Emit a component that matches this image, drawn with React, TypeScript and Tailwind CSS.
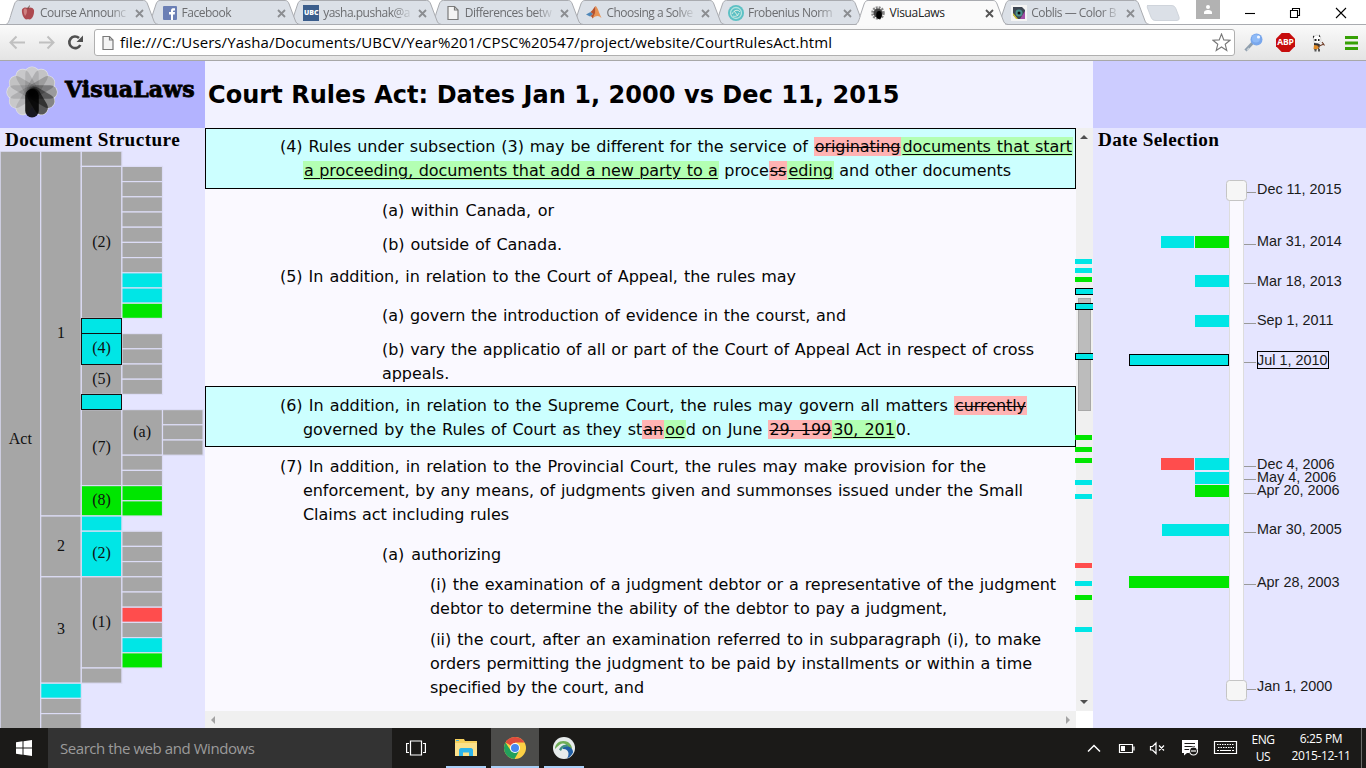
import React from "react";

/* ---------- Browser chrome ---------- */

const PageIcon = () => (
  <svg width="16" height="16" viewBox="0 0 16 16" fill="#f4f4f4" stroke="#7a7a7a" strokeWidth="1.2">
    <path d="M3 1.5h6.5l3.5 3.5v9.5H3z" />
    <path d="M9.5 1.5V5H13" fill="none" />
  </svg>
);

const AppleIcon = () => (
  <svg width="16" height="16" viewBox="0 0 16 16">
    <path d="M2 4.500C4 1.500 6 2.500 8 2.800C10.500 2 13 2.500 14 5C14.500 9 12.500 14.500 9.500 14.500C8 14 7.500 14.500 6 14.500C3 13 1.500 8 2 4.500Z" fill="#ad4a50" />
    <path d="M4 4c2-1 3 0 3 2s-1 4-2 5c-1-2-2-5-1-7z" fill="#cf8080" />
    <path d="M8 4c0-2 1-3 2-3" stroke="#6e4a40" fill="none" />
  </svg>
);

const FacebookIcon = () => (
  <svg width="16" height="16" viewBox="0 0 16 16">
    <rect x="1" y="1" width="14" height="14" rx="1" fill="#6b7fb5" />
    <path d="M9 15V9.500H7V7h2V5.500C9 3.500 10.500 3 13 3.300V5.500c-1.500-.1-2 .1-2 1V7h2l-.3 2.500H11V15z" fill="#fff" />
  </svg>
);

const UbcIcon = () => (
  <span className="flex h-4 w-4 items-center justify-center bg-[#3a5d8c] font-['Open_Sans',sans-serif] text-[7px] font-extrabold text-white">UBC</span>
);

const MatlabIcon = () => (
  <svg width="16" height="16" viewBox="0 0 16 16">
    <path d="M0 9.500L4.500 7L7 9L4 11.500Z" fill="#4f87b8" />
    <path d="M4.500 7C7 5.500 8 2 9.500 1L10 9L6.500 13.500C6 12 5 11 4 11.500L7 9Z" fill="#b5532f" />
    <path d="M9.500 1C11.500 1.500 13 8 15.500 13C13 11 11 9.500 6.500 13.500L9 8Z" fill="#e89254" />
  </svg>
);

const MathIcon = () => (
  <svg width="16" height="16" viewBox="0 0 16 16" fill="none">
    <circle cx="8" cy="8" r="8" fill="#5cc0c4" />
    <circle cx="8" cy="8" r="5.500" stroke="#b5e3e0" strokeWidth="1.300" />
    <path d="M4 9c2-4 6-5 8-2M5 11c2 1 5 0 6-3M6 6l4 5" stroke="#d8efe4" />
  </svg>
);

const petals: [angle: number, darkness: number][] = [
  [30, 0.1],
  [60, 0.12],
  [90, 0.12],
  [120, 0.15],
  [150, 0.12],
  [180, 0.1],
  [210, 0.14],
  [240, 0.2],
  [270, 0.32],
  [300, 0.42],
  [330, 0.62],
];

const Flower = ({ size }: { size: number }) => (
  <svg width={size} height={size} viewBox="-26 -26 52 52" className="shrink-0">
    {petals.map(([angle]) => (
      <rect key={angle} x="-7.300" y="-2" width="14.600" height="27.600" rx="7.300" fill="#e4e4e6" transform={`rotate(${angle})`} />
    ))}
    {petals.map(([angle, darkness]) => (
      <rect key={angle} x="-6.800" y="-3" width="13.600" height="28" rx="6.800" fill="#000" fillOpacity={darkness} transform={`rotate(${angle})`} />
    ))}
    <rect x="-6.800" y="-3" width="13.600" height="28.500" rx="6.800" fill="#000" fillOpacity="0.880" />
  </svg>
);

const BurstIcon = () => (
  <svg width="16" height="16" viewBox="-8 -8 16 16">
    <circle r="5.500" fill="none" stroke="#888" strokeWidth="2.600" strokeDasharray="1.900 0.980" />
    <circle r="4.500" fill="#444" />
    <ellipse cx="1" cy="2" rx="2.800" ry="4" fill="#000" />
  </svg>
);

const CoblisIcon = () => (
  <svg width="16" height="16" viewBox="0 0 16 16">
    <rect width="16" height="16" fill="#f4f4f4" />
    <path d="M2 2h9l3 3v9H6l-4-4z" fill="#3e4652" />
    <path d="M2 8l5 6H5l-3-4z" fill="#d3c93a" />
    <path d="M14 6v8H9z" fill="#a250a8" />
    <circle cx="8" cy="8" r="3.500" fill="#4a918c" />
    <circle cx="8" cy="8" r="1.500" fill="#111" />
  </svg>
);

const tabs = [
  { title: "Course Announc", icon: <AppleIcon /> },
  { title: "Facebook", icon: <FacebookIcon /> },
  { title: "yasha.pushak@a", icon: <UbcIcon /> },
  { title: "Differences betw", icon: <PageIcon /> },
  { title: "Choosing a Solve", icon: <MatlabIcon /> },
  { title: "Frobenius Norm", icon: <MathIcon /> },
  { title: "VisuaLaws", icon: <BurstIcon />, active: true },
  { title: "Coblis — Color B", icon: <CoblisIcon /> },
];

const tabShape = (x: number) =>
  `M${x} 24.500C${x + 3} 24 ${x + 4} 20 ${x + 6} 13L${x + 9} 4C${x + 10} 1.500 ${x + 11} 0.500 ${x + 13} 0.500H${x + 138}C${x + 140} 0.500 ${x + 141} 1.500 ${x + 142} 4L${x + 148} 20C${x + 149} 23 ${x + 150} 24 ${x + 153} 24.500`;

const TabStrip = () => (
  <div className="relative flex h-[25px] bg-white">
    <svg className="absolute inset-0" width="1366" height="25">
      {[7, 5, 4, 3, 2, 1, 0].map((i) => (
        <path key={i} d={tabShape(5.5 + i * 141.6)} fill="#dbe0e7" stroke="#a9abb0" />
      ))}
      <path d="M1147 5.500H1171C1174 5.500 1175 6.500 1176 9L1179 17C1179.500 19.500 1179 20.500 1176 20.500H1156C1153 20.500 1152 19.500 1151 17L1147.500 8C1147 6.500 1147 5.500 1149 5.500" fill="#dbe0e7" stroke="#cfd4db" />
      <path d="M0 24.500H1366" stroke="#a9abb0" />
      <path d={tabShape(5.5 + 6 * 141.6)} fill="#fafafa" stroke="#a9abb0" />
      <path d="M857 24.500H1005" stroke="#fafafa" />
    </svg>
    <div className="relative flex h-full pl-[20px]">
      {tabs.map((t) => (
        <div key={t.title} className="flex h-full w-[141.6px] items-center pt-[1px]">
          {t.icon}
          <span
            className={
              t.active
                ? "ml-[4px] w-[90px] font-['Open_Sans',sans-serif] text-[12px] tracking-[-0.3px] whitespace-nowrap text-[#222]"
                : "ml-[4px] w-[90px] [mask-image:linear-gradient(to_right,black_78%,transparent)] font-['Open_Sans',sans-serif] text-[12px] tracking-[-0.5px] whitespace-nowrap text-[#6c6d70]"
            }
          >
            {t.title}
          </span>
          <svg width="9" height="9" viewBox="0 0 9 9" className="ml-[5px]">
            <path d="M1 1l7 7M8 1l-7 7" stroke={t.active ? "#555" : "#8b8d91"} strokeWidth="1.800" />
          </svg>
        </div>
      ))}
    </div>
    <div className="absolute top-0 right-0 flex h-[25px] w-[170px]">
      <div className="flex h-[19px] w-6 items-center justify-center bg-[#b2b2b2]">
        <svg width="10" height="9" viewBox="0 0 10 9" fill="#fff">
          <circle cx="5" cy="2" r="2" />
          <path d="M1 9V7.500C1 5.500 4 5 5 5s4 .5 4 2.500V9z" />
        </svg>
      </div>
      <svg width="146" height="25" viewBox="1220 0 146 25" fill="none" stroke="#000" strokeWidth="1.100">
        <path d="M1245 13.500H1255" />
        <path d="M1290.500 10.500h7v7h-7zM1292.500 10.500v-2h7v7h-2" />
        <path d="M1336 8l10 10M1346 8l-10 10" />
      </svg>
    </div>
  </div>
);

const Toolbar = () => (
  <div className="flex h-[36px] items-center border-b border-[#a8a8a8] bg-gradient-to-b from-[#fafafa] to-[#e4e4e4]">
    <svg width="94" height="35" viewBox="0 25 94 35" fill="none">
      <path d="M25 42.500H11M16.500 36.500L10.500 42.500L16.500 48.500" stroke="#c0c0c0" strokeWidth="2" />
      <path d="M39 42.500H53M47.500 36.500L53.500 42.500L47.500 48.500" stroke="#c0c0c0" strokeWidth="2" />
      <path d="M80.300 45A5.800 5.800 0 1 1 79 38" stroke="#505050" strokeWidth="2.600" />
      <path d="M83 35.500V42h-6.500z" fill="#505050" />
    </svg>
    <div className="flex h-[27px] w-[1141px] items-center rounded-[3px] border border-[#b0b0b0] bg-white pl-[5px]">
      <PageIcon />
      <span className="ml-[4px] w-[716px] pb-[2px] font-['Open_Sans',sans-serif] text-[15px] leading-[22px] tracking-[0.09px] whitespace-nowrap text-black">
        file:///C:/Users/Yasha/Documents/UBCV/Year%201/CPSC%20547/project/website/CourtRulesAct.html
      </span>
      <svg className="ml-auto mr-[3px]" width="19" height="19" viewBox="0 0 19 19">
        <path d="M9.500 1L11.800 6.900L18 7.300L13.200 11.200L14.800 17.500L9.500 14L4.200 17.500L5.800 11.200L1 7.300L7.200 6.900Z" fill="#fff" stroke="#777" strokeWidth="1.100" />
      </svg>
    </div>
    <svg className="ml-[9px]" width="19" height="19" viewBox="0 0 19 19">
      <path d="M1.500 17.500L9 9.500" stroke="#8f9fae" strokeWidth="3" />
      <path d="M3 17.500L5 15" stroke="#c8d0d6" strokeWidth="1.500" />
      <circle cx="12.500" cy="6.500" r="6" fill="#79a7ec" />
      <circle cx="12" cy="5.500" r="4" fill="#8ebaf7" />
      <circle cx="14.500" cy="4" r="1.600" fill="#f1f6ff" />
    </svg>
    <div className="ml-[13px] flex h-[19px] w-[19px] items-center justify-center bg-[#c70d0d] [clip-path:polygon(30%_0,70%_0,100%_30%,100%_70%,70%_100%,30%_100%,0_70%,0_30%)] font-['Open_Sans',sans-serif] text-[8.5px] font-bold tracking-[-0.2px] text-white">
      ABP
    </div>
    <svg className="ml-[15px]" width="18" height="18" viewBox="0 0 18 18">
      <path d="M3 2.500L7 1l3.500 2L11 7l-3 2.500L4 8.500z" fill="#fff" stroke="#b5b5b5" strokeWidth="0.500" />
      <path d="M3 1.500l1.500 1L3 4.500zM9 .5l1.500 2-1.500.5zM4.500 5h2v2h-2zM8 5h1.500v2H8z" fill="#222" />
      <path d="M4 9l4 .5 2 1-1 5-2-2-3 2.500z" fill="#333" />
      <path d="M4 11l3.500.5 1.500 2-2.500 2.500-3-1z" fill="#e08a25" />
      <path d="M8 12.500l6-2.500M12 8l2.500 3.500" stroke="#71402c" strokeWidth="1.200" />
      <path d="M4.500 15h2v2.500h-2zM8 15h2v2.500H8z" fill="#555" />
    </svg>
    <svg className="ml-[17px]" width="13" height="14" viewBox="0 0 13 14">
      <path d="M0 1.500h13M0 7h13M0 12.500h13" stroke="#36a005" strokeWidth="3" />
    </svg>
  </div>
);

/* ---------- Document structure chart ---------- */

const GREY = "#a6a6a6";
const CYAN = "#00e6e6";
const GREEN = "#00e600";
const RED = "#ff4d4d";

type Cell = [col: number, from: number, to: number, color: string, label?: string];

const cells: Cell[] = [
  [0, 0, 39, GREY, "Act"],
  [1, 0, 24, GREY, "1"],
  [1, 24, 28, GREY, "2"],
  [1, 28, 35, GREY, "3"],
  [1, 35, 36, CYAN],
  [1, 36, 37, GREY],
  [1, 37, 39, GREY],
  [2, 0, 1, GREY],
  [2, 1, 11, GREY, "(2)"],
  [2, 14, 16, GREY, "(5)"],
  [2, 17, 22, GREY, "(7)"],
  [2, 22, 24, GREEN, "(8)"],
  [2, 24, 25, CYAN],
  [2, 25, 28, CYAN, "(2)"],
  [2, 28, 34, GREY, "(1)"],
  [2, 34, 35, GREY],
  ...[1, 2, 3, 4, 5, 6, 7].map((n): Cell => [3, n, n + 1, GREY]),
  [3, 8, 9, CYAN],
  [3, 9, 10, CYAN],
  [3, 10, 11, GREEN],
  ...[12, 13, 14, 15].map((n): Cell => [3, n, n + 1, GREY]),
  [3, 17, 20, GREY, "(a)"],
  [3, 20, 21, GREY],
  [3, 21, 22, GREY],
  [3, 22, 23, GREEN],
  [3, 23, 24, GREEN],
  ...[25, 26, 27, 28, 29].map((n): Cell => [3, n, n + 1, GREY]),
  [3, 30, 31, RED],
  [3, 31, 32, GREY],
  [3, 32, 33, CYAN],
  [3, 33, 34, GREEN],
  ...[17, 18, 19].map((n): Cell => [4, n, n + 1, GREY]),
];

const selected: Cell[] = [
  [2, 11, 12, CYAN],
  [2, 12, 14, CYAN, "(4)"],
  [2, 16, 17, CYAN],
];

const cx = (col: number) => 0.1 + col * 40.6;
const cy = (row: number) => 151.2 + row * 15.2;

const StructureChart = () => (
  <svg width="205" height="577" viewBox="0 151 205 577" className="block font-['Liberation_Serif',serif] text-[16px]">
    {cells.map(([c, a, b, color, label], i) => (
      <g key={i}>
        <rect x={cx(c)} y={cy(a)} width={40.6} height={cy(b) - cy(a)} fill={color} stroke="#dcdcf6" strokeWidth="1.200" />
        {label && (
          <text x={cx(c) + 20.2} y={label === "Act" ? 444 : (cy(a) + cy(b)) / 2 + 4.4} textAnchor="middle" fill="#111">
            {label}
          </text>
        )}
      </g>
    ))}
    {selected.map(([c, a, b, color, label], i) => (
      <g key={i}>
        <rect x={Math.round(cx(c)) + 0.5} y={Math.floor(cy(a)) + 0.5} width={40} height={Math.floor(cy(b)) - Math.floor(cy(a))} fill={color} stroke="#111" />
        {label && (
          <text x={cx(c) + 20.2} y={(cy(a) + cy(b)) / 2 + 4.4} textAnchor="middle" fill="#111">
            {label}
          </text>
        )}
      </g>
    ))}
  </svg>
);

/* ---------- Document text ---------- */

const Ins = ({ children }: { children: React.ReactNode }) => (
  <ins className="bg-[#b3ffb3] px-px underline decoration-1 underline-offset-2">{children}</ins>
);
const Del = ({ children }: { children: React.ReactNode }) => (
  <del className="bg-[#ffb3b3] px-px line-through decoration-1">{children}</del>
);

const line = "h-6 whitespace-nowrap [text-align-last:justify] ";

const DocumentText = () => (
  <div className="h-[583px] w-[871px] overflow-hidden bg-[#faf9ff] font-['DejaVu_Sans',sans-serif] text-[16px] leading-6 tracking-[-0.06px] text-[#050505]">
    <div className="h-[61px] border border-black bg-[#ccffff] pt-[6px]">
      <div className={line + "ml-[74px] w-[793px]"}>
        (4) Rules under subsection (3) may be different for the service of <Del>originating</Del><Ins>documents that start</Ins>
      </div>
      <div className={line + "ml-[97px] w-[708px]"}>
        <Ins>a proceeding, documents that add a new party to a</Ins> proce<Del>ss</Del><Ins>eding</Ins> and other documents
      </div>
    </div>
    <div className={line + "mt-[10px] ml-[177px] w-[172px]"}>(a) within Canada, or</div>
    <div className={line + "mt-[10px] ml-[177px] w-[180px]"}>(b) outside of Canada.</div>
    <div className={line + "mt-[8px] ml-[75px] w-[516px]"}>(5) In addition, in relation to the Court of Appeal, the rules may</div>
    <div className={line + "mt-[15px] ml-[177px] w-[464px]"}>(a) govern the introduction of evidence in the courst, and</div>
    <div className={line + "mt-[10px] ml-[177px] w-[652px]"}>(b) vary the applicatio of all or part of the Court of Appeal Act in respect of cross</div>
    <div className={line + "ml-[177px] w-[67px]"}>appeals.</div>
    <div className="h-[61px] border border-black bg-[#ccffff] pt-[7px]">
      <div className={line + "ml-[74px] w-[747px]"}>
        (6) In addition, in relation to the Supreme Court, the rules may govern all matters <Del>currently</Del>
      </div>
      <div className={line + "ml-[97px] w-[608px]"}>
        governed by the Rules of Court as they st<Del>an</Del><Ins>oo</Ins>d on June <Del>29, 199</Del><Ins>30, 201</Ins>0.
      </div>
    </div>
    <div className={line + "mt-[8px] ml-[75px] w-[706px]"}>(7) In addition, in relation to the Provincial Court, the rules may make provision for the</div>
    <div className={line + "ml-[98px] w-[720px]"}>enforcement, by any means, of judgments given and summonses issued under the Small</div>
    <div className={line + "ml-[98px] w-[206px]"}>Claims act including rules</div>
    <div className={line + "mt-[16px] ml-[177px] w-[119px]"}>(a) authorizing</div>
    <div className={line + "mt-[6px] ml-[225px] w-[626px]"}>(i) the examination of a judgment debtor or a representative of the judgment</div>
    <div className={line + "ml-[225px] w-[517px]"}>debtor to determine the ability of the debtor to pay a judgment,</div>
    <div className={line + "mt-[7px] ml-[225px] w-[611px]"}>(ii) the court, after an examination referred to in subparagraph (i), to make</div>
    <div className={line + "ml-[225px] w-[602px]"}>orders permitting the judgment to be paid by installments or within a time</div>
    <div className={line + "ml-[225px] w-[214px]"}>specified by the court, and</div>
  </div>
);

const marks: [y: number, color: string, outlined?: boolean][] = [
  [259, CYAN],
  [268, CYAN],
  [277, GREEN],
  [288, CYAN, true],
  [303, CYAN, true],
  [353, CYAN, true],
  [435, GREEN],
  [447, GREEN],
  [458, GREEN],
  [480, CYAN],
  [494, CYAN],
  [563, RED],
  [581, CYAN],
  [595, GREEN],
  [627, CYAN],
];

const ScrollMap = () => (
  <div className="h-[583px] w-[17px] bg-[#f0f0f0]">
    <svg width="18" height="583" viewBox="1075 128 18 583" className="relative -left-px block max-w-none">
      <path d="M1080 139h8l-4-4z" fill="#505050" />
      <path d="M1080 700h8l-4 4z" fill="#505050" />
      <rect x="1078.500" y="298.500" width="12" height="112" fill="#bcbcbc" stroke="#a8a8a8" />
      {marks.map(([y, color, outlined]) =>
        outlined ? (
          <rect key={y} x="1075.500" y={y + 0.5} width="20" height="6" fill={color} stroke="#000" />
        ) : (
          <rect key={y} x="1075" y={y} width="17" height="5" fill={color} />
        )
      )}
    </svg>
  </div>
);

/* ---------- Timeline ---------- */

const dates: [label: string, baseline: number, tick: number][] = [
  ["Dec 11, 2015", 194, 192.5],
  ["Mar 31, 2014", 246, 244.5],
  ["Mar 18, 2013", 286, 283.5],
  ["Sep 1, 2011", 325, 323.5],
  ["Jul 1, 2010", 365, 362.5],
  ["Dec 4, 2006", 469, 466.5],
  ["May 4, 2006", 482, 479.5],
  ["Apr 20, 2006", 495, 493.5],
  ["Mar 30, 2005", 534, 532.5],
  ["Apr 28, 2003", 587, 584.5],
  ["Jan 1, 2000", 691, 689.5],
];

const bars: [x: number, y: number, w: number, color: string][] = [
  [1161, 236, 33, CYAN],
  [1195, 236, 34, GREEN],
  [1195, 275, 34, CYAN],
  [1195, 315, 34, CYAN],
  [1161, 458, 33, RED],
  [1195, 458, 34, CYAN],
  [1195, 472, 34, CYAN],
  [1195, 485, 34, GREEN],
  [1162, 524, 67, CYAN],
  [1129, 576, 100, GREEN],
];

const Timeline = () => (
  <svg width="273" height="577" viewBox="1093 151 273 577" className="block font-['Liberation_Sans',sans-serif] text-[14.4px]">
    <rect x="1229.500" y="190" width="14" height="500" fill="#faf9ff" stroke="#dddddd" />
    {bars.map(([x, y, w, color], i) => (
      <rect key={i} x={x} y={y} width={w} height="12" fill={color} />
    ))}
    <rect x="1129.500" y="354.500" width="99" height="11" fill={CYAN} stroke="#000" />
    {dates.map(([label, y, tick]) => (
      <g key={label}>
        <path d={`M1244 ${tick}H1256`} stroke="#999" />
        <text x="1257" y={y} fill="#1a1a1a">{label}</text>
      </g>
    ))}
    <rect x="1257.500" y="351.500" width="71" height="17" fill="none" stroke="#000" />
    <rect x="1226.500" y="180.500" width="20" height="20" rx="3" fill="#f6f6f6" stroke="#c5c5c5" />
    <rect x="1226.500" y="680.500" width="20" height="20" rx="3" fill="#f6f6f6" stroke="#c5c5c5" />
  </svg>
);

/* ---------- Taskbar ---------- */

const Taskbar = () => (
  <div className="flex h-10 items-stretch bg-[#1b1a18] font-['Open_Sans',sans-serif]">
    <div className="flex w-12 items-center justify-center">
      <svg width="16" height="16" viewBox="0 0 16 16" fill="#fff">
        <path d="M0 2.300L6.500 1.300V7.500H0zM7.500 1.200L16 0V7.500H7.500zM0 8.500H6.500V14.700L0 13.700zM7.500 8.500H16V16L7.500 14.800z" />
      </svg>
    </div>
    <div className="flex w-[344px] items-center bg-[#333333] pl-3 text-[15px] tracking-[-0.44px] text-[#9b9b9b]">Search the web and Windows</div>
    <div className="flex w-[48px] items-center justify-center">
      <svg width="20" height="16" viewBox="0 0 20 16" fill="none" stroke="#fff" strokeWidth="1.200">
        <path d="M4.500 1h11v14h-11zM3 3.500H.6v9H3M17 3.500h2.400v9H17" />
      </svg>
    </div>
    <div className="ml-[6px] flex w-10 flex-col items-center justify-between">
      <svg className="mt-[10px]" width="22" height="19" viewBox="0 0 22 19">
        <path d="M0 1h9l1 2h12v15H0z" fill="#f6d05c" />
        <path d="M0 5h22v13H0z" fill="#fbe18a" />
        <path d="M1 2h3v1H1z" fill="#3fb3d9" />
        <path d="M4 18V12c0-1 1-2 2-2h10c1 0 2 1 2 2v6h-4v-3.500H8V18z" fill="#2cb4ea" />
      </svg>
      <div className="h-[2px] w-full bg-[#a9cff7]" />
    </div>
    <div className="ml-[5px] flex w-12 flex-col items-center justify-between bg-[#4c4c4a]">
      <svg className="mt-[9px]" width="22" height="22" viewBox="0 0 22 22">
        <circle cx="11" cy="11" r="11" fill="#fcd045" />
        <path d="M11 11L1.470 5.500A11 11 0 0 1 20.530 5.500H11Z" fill="#de4b3d" />
        <path d="M1.470 5.500L6.700 13.500L15.300 13.500L10.500 22A11 11 0 0 1 1.470 5.500Z" fill="#23a05c" />
        <circle cx="11" cy="11" r="5" fill="#fff" />
        <circle cx="11" cy="11" r="4" fill="#4787f0" />
      </svg>
      <div className="h-[2px] w-full bg-[#a9cff7]" />
    </div>
    <div className="ml-[5px] flex w-10 flex-col items-center justify-between">
      <svg className="mt-[9px]" width="22" height="22" viewBox="0 0 22 22">
        <circle cx="11" cy="11" r="11" fill="#e6ebeb" />
        <path d="M2 12C2 6 8 2 15 5C18 7 19 10 19 12L15.500 11C14 7 10 5.500 7 7.500C5 9 3.500 10.500 2 12Z" fill="#6fae56" />
        <path d="M10 9.500C14 8 20.500 10.500 20 15.500C18.500 18.500 16.500 20.500 14 21.500C17 17 15.500 11.500 10 12Z" fill="#215fa5" />
        <path d="M6 12.500C8 8.500 11 7 15 8L13.500 10C11 9.500 9 11.500 8 14Z" fill="#3f8f80" />
      </svg>
      <div className="h-[2px] w-full bg-[#a9cff7]" />
    </div>
    <svg className="ml-auto" width="160" height="40" viewBox="1084 728 160 40" fill="none" stroke="#fff" strokeWidth="1.200">
      <path d="M1088 751.500L1094 745.500L1100 751.500" strokeWidth="1.500" />
      <path d="M1119.500 744.500h13v8h-13zM1134 746.500v4" />
      <path d="M1121 746h4v5h-4z" fill="#fff" stroke="none" />
      <path d="M1150.500 746.500h2l3.500-3.500v10.500l-3.500-3.500h-2zM1159 745.500l5 5M1164 745.500l-5 5" />
      <path d="M1182 740h16v9h-3a5 5 0 0 0-6 4h-2l-3 2.500V753h-2z" fill="#fff" stroke="none" />
      <path d="M1184.500 743.500h10.500M1184.500 746.500h10.500M1184.500 749.500h5" stroke="#1b1a18" />
      <circle cx="1193.500" cy="751" r="4" fill="#1b1a18" />
      <path d="M1191 751h5" />
      <path d="M1214.500 741.500h22v12h-22z" />
      <path d="M1217 744.500h17M1218 747.500h16" strokeDasharray="1.500 1" />
      <path d="M1217 750.500h2M1220 750.500h11M1232 750.500h2" />
    </svg>
    <div className="flex w-[40px] flex-col items-center pt-[3px] pr-[2px] text-[12px] leading-[17px] tracking-[-0.4px] text-white">
      <span>ENG</span>
      <span>US</span>
    </div>
    <div className="flex w-[74px] flex-col items-center pt-[2px] text-[12px] leading-[17px] tracking-[-0.35px] text-white">
      <span>6:25 PM</span>
      <span>2015-12-11</span>
    </div>
    <div className="ml-[3px] w-[5px] border-l border-[#6b6b69]" />
  </div>
);

/* ---------- Page ---------- */

export default function App() {
  return (
    <div className="flex h-[768px] w-[1366px] flex-col overflow-hidden bg-white">
      <TabStrip />
      <Toolbar />
      <header className="flex h-[67px] shrink-0">
        <div className="flex w-[205px] bg-[#b3b3ff]">
          <div className="pt-[5px] pl-[6px]">
            <Flower size={52} />
          </div>
          <span className="ml-[7px] pt-[14px] font-['DejaVu_Serif',serif] text-[22px] leading-[28px] font-bold tracking-[0.1px] text-black [-webkit-text-stroke:0.8px_black]">VisuaLaws</span>
        </div>
        <h1 className="w-[888px] bg-[#f2f2ff] pt-[19px] pl-[3px] font-['DejaVu_Sans',sans-serif] text-[24px] leading-[30px] font-bold tracking-[0.05px] whitespace-nowrap text-black">
          Court Rules Act: Dates Jan 1, 2000 vs Dec 11, 2015
        </h1>
        <div className="flex-1 bg-[#ccccff]" />
      </header>
      <main className="flex h-[600px] shrink-0">
        <aside className="w-[205px] bg-[#e5e5ff]">
          <h2 className="h-[23px] pl-[5px] font-['Liberation_Serif',serif] text-[19.2px] leading-[24px] font-bold tracking-[0.42px] whitespace-nowrap text-black">Document Structure</h2>
          <StructureChart />
        </aside>
        <section className="flex w-[888px] flex-col">
          <div className="flex">
            <DocumentText />
            <ScrollMap />
          </div>
          <div className="flex h-[17px]">
            <div className="flex w-[871px] items-center justify-between bg-[#f0f0f0] px-[6px]">
              <svg width="4" height="8" viewBox="0 0 4 8"><path d="M4 0v8L0 4z" fill="#a3a3a3" /></svg>
              <svg width="4" height="8" viewBox="0 0 4 8"><path d="M0 0v8l4-4z" fill="#a3a3a3" /></svg>
            </div>
            <div className="w-[17px] bg-white" />
          </div>
        </section>
        <aside className="w-[273px] bg-[#e5e5ff]">
          <h2 className="h-[23px] pl-[5px] font-['Liberation_Serif',serif] text-[19.2px] leading-[24px] font-bold tracking-[0.32px] whitespace-nowrap text-black">Date Selection</h2>
          <Timeline />
        </aside>
      </main>
      <Taskbar />
    </div>
  );
}
